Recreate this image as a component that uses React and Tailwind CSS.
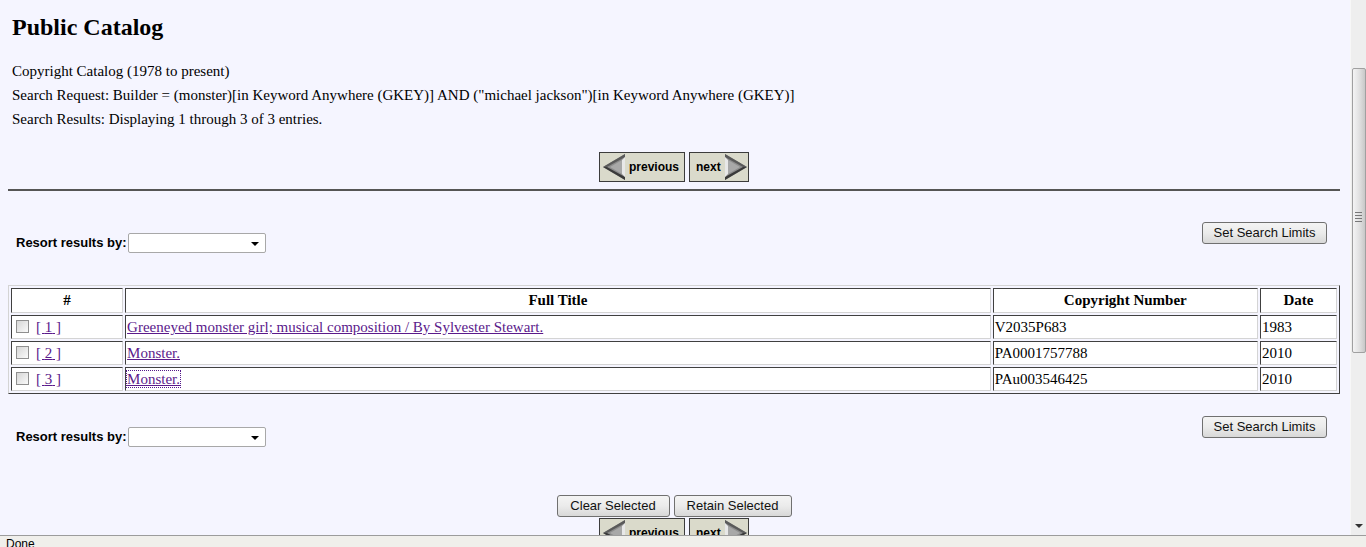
import React from 'react';

const serif = "font-['Liberation_Serif','Times_New_Roman',serif]";
const sans = "font-['Liberation_Sans',Arial,sans-serif]";

const cellBase = "border border-t-[#404040] border-l-[#404040] border-b-[#d4d4d4] border-r-[#d4d4d4] bg-white px-[1px]";

const rows = [
  { n: 1, title: 'Greeneyed monster girl; musical composition / By Sylvester Stewart.', num: 'V2035P683', date: '1983' },
  { n: 2, title: 'Monster.', num: 'PA0001757788', date: '2010' },
  { n: 3, title: 'Monster.', num: 'PAu003546425', date: '2010', focus: true },
];

const Arrow = ({ dir }) => (
  <svg width="24" height="28" viewBox="0 0 24 28" className="shrink-0">
    {dir === 'left' ? (
      <g>
        <polygon points="1,14 23,1 23,27" fill="#8c8c8c" />
        <polygon points="1,14 23,1 23,4 5,14" fill="#5a5a5a" />
        <polygon points="1,14 5,14 23,24 23,27" fill="#3a3a3a" />
        <polygon points="8,14 20,7 20,21" fill="#a8a8a8" />
        <polygon points="20,7 23,4 23,24 20,21" fill="#e8e8e8" />
      </g>
    ) : (
      <g>
        <polygon points="23,14 1,1 1,27" fill="#8c8c8c" />
        <polygon points="23,14 1,1 1,4 19,14" fill="#5a5a5a" />
        <polygon points="23,14 19,14 1,24 1,27" fill="#3a3a3a" />
        <polygon points="16,14 4,7 4,21" fill="#a8a8a8" />
        <polygon points="4,7 1,4 1,24 4,21" fill="#e8e8e8" />
      </g>
    )}
  </svg>
);

const NavButtons = ({ className = '' }) => (
  <div className={`flex justify-center gap-[4px] ${className}`}>
    <div className={`w-[86px] h-[30px] border border-[#3c3c3c] bg-[#dadacb] flex items-center pl-[2px] gap-[3px] ${sans} text-[12px] font-bold text-black`}>
      <Arrow dir="left" />
      <span>previous</span>
    </div>
    <div className={`w-[60px] h-[30px] border border-[#3c3c3c] bg-[#dadacb] flex items-center pl-[6px] gap-[3px] ${sans} text-[12px] font-bold text-black`}>
      <span>next</span>
      <Arrow dir="right" />
    </div>
  </div>
);

const GrayButton = ({ children, w }) => (
  <div className={`${w} h-[22px] flex items-center justify-center rounded-[3px] border border-[#707070] bg-linear-to-b from-[#f4f4f4] via-[#ebebeb] to-[#d8d8d8] ${sans} text-[13px] text-[#111]`}>
    {children}
  </div>
);

const Select = () => (
  <div className="relative w-[138px] h-[20px] bg-white border border-[#a8a8a8] rounded-[2px]">
    <span className="absolute right-[6px] top-[8px] w-0 h-0 border-x-[4px] border-x-transparent border-t-[4px] border-t-black" />
  </div>
);

const ResortRow = ({ className = '' }) => (
  <div className={`flex justify-between items-start ${className}`}>
    <div className="flex items-center gap-[1px] mt-[11px] pl-[8px]">
      <span className={`${sans} text-[13px] font-bold text-black`}>Resort results by:</span>
      <Select />
    </div>
    <div className="mr-[13px]">
      <GrayButton w="w-[125px]">Set Search Limits</GrayButton>
    </div>
  </div>
);

const Checkbox = () => (
  <span className="inline-block w-[13px] h-[13px] border border-[#8f8f8f] bg-linear-to-br from-[#d6d6d6] to-[#fafafa] align-[-1px] ml-[3px] mr-[7px]" />
);

const linkCls = "text-[#5b1a8b] underline";

export default function App() {
  return (
    <div className="w-[1366px] h-[547px] flex flex-col overflow-hidden">
      <div className="flex h-[535px]">
        <div className={`flex-1 h-[535px] overflow-hidden bg-[#f5f5ff] pl-[8px] pr-[10px] ${serif} text-black`}>
          <h1 className="pl-[4px] pt-[13px] text-[24px] leading-[28px] font-bold">Public Catalog</h1>
          <div className="pl-[4px] mt-[18px] text-[15px] leading-[24px]">
            <p>Copyright Catalog (1978 to present)</p>
            <p>Search Request: Builder = (monster)[in Keyword Anywhere (GKEY)] AND ("michael jackson")[in Keyword Anywhere (GKEY)]</p>
            <p>Search Results: Displaying 1 through 3 of 3 entries.</p>
          </div>
          <NavButtons className="mt-[21px]" />
          <div className="mt-[7px] h-[2px] bg-[#555]" />

          <ResortRow className="mt-[31px]" />

          <table className="mt-[32px] w-full table-fixed border-separate border-spacing-[2px] border border-t-[#d4d4d4] border-l-[#d4d4d4] border-b-[#404040] border-r-[#404040] text-[15px]">
            <colgroup>
              <col className="w-[112px]" />
              <col className="w-[865px]" />
              <col className="w-[265px]" />
              <col className="w-[77px]" />
            </colgroup>
            <thead>
              <tr>
                {['#', 'Full Title', 'Copyright Number', 'Date'].map((h) => (
                  <th key={h} className={`${cellBase} py-[3px] leading-[17px] font-bold text-center`}>{h}</th>
                ))}
              </tr>
            </thead>
            <tbody>
              {rows.map((r) => (
                <tr key={r.n}>
                  <td className={`${cellBase} py-[2px] leading-[18px]`}>
                    <Checkbox />
                    <span className={linkCls}>[ {r.n} ]</span>
                  </td>
                  <td className={`${cellBase} py-[2px] leading-[18px]`}>
                    <span className={`${linkCls} ${r.focus ? 'outline outline-1 outline-dotted outline-[#551a8b]' : ''}`}>{r.title}</span>
                  </td>
                  <td className={`${cellBase} py-[2px] leading-[18px]`}>{r.num}</td>
                  <td className={`${cellBase} py-[2px] leading-[18px]`}>{r.date}</td>
                </tr>
              ))}
            </tbody>
          </table>

          <ResortRow className="mt-[22px]" />

          <div className="mt-[48px] flex justify-center gap-[4px]">
            <GrayButton w="w-[113px]">Clear Selected</GrayButton>
            <GrayButton w="w-[118px]">Retain Selected</GrayButton>
          </div>
          <NavButtons className="mt-[1px]" />
        </div>

        {/* scrollbar */}
        <div className="w-[16px] h-[535px] bg-[#eeeeee] border-l border-l-[#f7f7f7] flex flex-col items-center">
          <div className="mt-[68px] w-[14px] h-[285px] rounded-[2px] border border-[#a0a0a0] bg-linear-to-r from-[#f4f4f4] via-[#e2e2e2] to-[#c8c8c8] flex flex-col items-center justify-center gap-[2px] pt-[12px]">
            <span className="w-[7px] h-[1px] bg-[#777]" />
            <span className="w-[7px] h-[1px] bg-[#777]" />
            <span className="w-[7px] h-[1px] bg-[#777]" />
            <span className="w-[7px] h-[1px] bg-[#777]" />
          </div>
          <span className="mt-[171px] w-0 h-0 border-x-[4px] border-x-transparent border-t-[4px] border-t-[#333]" />
        </div>
      </div>

      {/* status bar */}
      <div className={`h-[12px] border-t border-t-[#9c9c9c] bg-[#f0efeb] pl-[6px] overflow-hidden ${sans} text-[12px] leading-[16px] text-black`}>
        Done
      </div>
    </div>
  );
}
